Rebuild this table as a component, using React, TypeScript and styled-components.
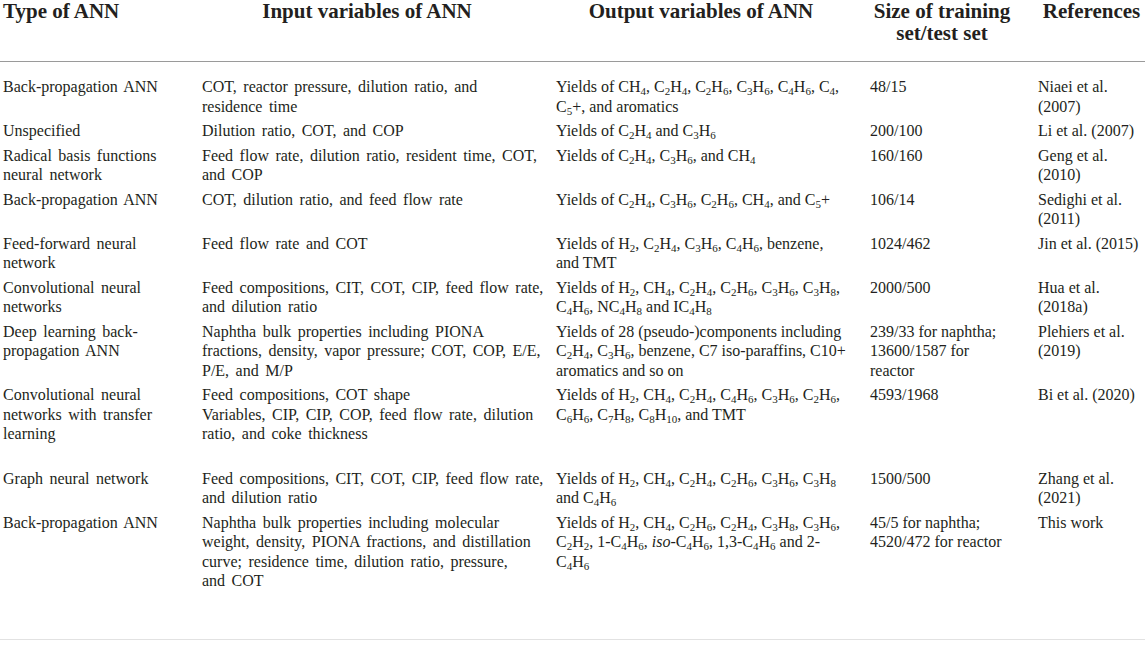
import styled, { createGlobalStyle } from 'styled-components';

type Entry = {
  type: string[];
  input: string[];
  output: string[];
  size: string[];
  refs: string[];
  gapAfter?: boolean;
};

// "_n" marks a subscript, "*x*" marks italics
const ROWS: Entry[] = [
  {
    type: ['Back-propagation ANN'],
    input: ['COT, reactor pressure, dilution ratio, and', 'residence time'],
    output: ['Yields of CH_4, C_2H_4, C_2H_6, C_3H_6, C_4H_6, C_4,', 'C_5+, and aromatics'],
    size: ['48/15'],
    refs: ['Niaei et al.', '(2007)'],
  },
  {
    type: ['Unspecified'],
    input: ['Dilution ratio, COT, and COP'],
    output: ['Yields of C_2H_4 and C_3H_6'],
    size: ['200/100'],
    refs: ['Li et al. (2007)'],
  },
  {
    type: ['Radical basis functions', 'neural network'],
    input: ['Feed flow rate, dilution ratio, resident time, COT,', 'and COP'],
    output: ['Yields of C_2H_4, C_3H_6, and CH_4'],
    size: ['160/160'],
    refs: ['Geng et al.', '(2010)'],
  },
  {
    type: ['Back-propagation ANN'],
    input: ['COT, dilution ratio, and feed flow rate'],
    output: ['Yields of C_2H_4, C_3H_6, C_2H_6, CH_4, and C_5+'],
    size: ['106/14'],
    refs: ['Sedighi et al.', '(2011)'],
  },
  {
    type: ['Feed-forward neural', 'network'],
    input: ['Feed flow rate and COT'],
    output: ['Yields of H_2, C_2H_4, C_3H_6, C_4H_6, benzene,', 'and TMT'],
    size: ['1024/462'],
    refs: ['Jin et al. (2015)'],
  },
  {
    type: ['Convolutional neural', 'networks'],
    input: ['Feed compositions, CIT, COT, CIP, feed flow rate,', 'and dilution ratio'],
    output: ['Yields of H_2, CH_4, C_2H_4, C_2H_6, C_3H_6, C_3H_8,', 'C_4H_6, NC_4H_8 and IC_4H_8'],
    size: ['2000/500'],
    refs: ['Hua et al.', '(2018a)'],
  },
  {
    type: ['Deep learning back-', 'propagation ANN'],
    input: [
      'Naphtha bulk properties including PIONA',
      'fractions, density, vapor pressure; COT, COP, E/E,',
      'P/E, and M/P',
    ],
    output: [
      'Yields of 28 (pseudo-)components including',
      'C_2H_4, C_3H_6, benzene, C7 iso-paraffins, C10+',
      'aromatics and so on',
    ],
    size: ['239/33 for naphtha;', '13600/1587 for', 'reactor'],
    refs: ['Plehiers et al.', '(2019)'],
  },
  {
    type: ['Convolutional neural', 'networks with transfer', 'learning'],
    input: [
      'Feed compositions, COT shape',
      'Variables, CIP, CIP, COP, feed flow rate, dilution',
      'ratio, and coke thickness',
    ],
    output: ['Yields of H_2, CH_4, C_2H_4, C_4H_6, C_3H_6, C_2H_6,', 'C_6H_6, C_7H_8, C_8H_10, and TMT'],
    size: ['4593/1968'],
    refs: ['Bi et al. (2020)'],
    gapAfter: true,
  },
  {
    type: ['Graph neural network'],
    input: ['Feed compositions, CIT, COT, CIP, feed flow rate,', 'and dilution ratio'],
    output: ['Yields of H_2, CH_4, C_2H_4, C_2H_6, C_3H_6, C_3H_8', 'and C_4H_6'],
    size: ['1500/500'],
    refs: ['Zhang et al.', '(2021)'],
  },
  {
    type: ['Back-propagation ANN'],
    input: [
      'Naphtha bulk properties including molecular',
      'weight, density, PIONA fractions, and distillation',
      'curve; residence time, dilution ratio, pressure,',
      'and COT',
    ],
    output: [
      'Yields of H_2, CH_4, C_2H_6, C_2H_4, C_3H_8, C_3H_6,',
      'C_2H_2, 1-C_4H_6, *iso*-C_4H_6, 1,3-C_4H_6 and 2-',
      'C_4H_6',
    ],
    size: ['45/5 for naphtha;', '4520/472 for reactor'],
    refs: ['This work'],
  },
];

const COLUMNS = '199px 354px 314px 168px 1fr';

function Rich({ text }: { text: string }) {
  const parts = text.split(/(_\d+|\*[^*]+\*)/);
  return (
    <>
      {parts.map((part, i) => {
        if (part.startsWith('_')) return <Sub key={i}>{part.slice(1)}</Sub>;
        if (part.startsWith('*')) return <em key={i}>{part.slice(1, -1)}</em>;
        return part;
      })}
    </>
  );
}

function CellLines({ lines, spaced }: { lines: string[]; spaced?: boolean }) {
  return (
    <Cell $spaced={spaced}>
      {lines.map((line, i) => (
        <Line key={i}>
          <Rich text={line} />
        </Line>
      ))}
    </Cell>
  );
}

export default function App() {
  return (
    <>
      <GlobalStyle />
      <StyledTable>
        <HeaderRow>
          <HeadCell $align="left">Type of ANN</HeadCell>
          <HeadCell>Input variables of ANN</HeadCell>
          <HeadCell>Output variables of ANN</HeadCell>
          <HeadCell>
            Size of training
            <br />
            set/test set
          </HeadCell>
          <HeadCell $padRight={0}>References</HeadCell>
        </HeaderRow>
        <Body>
          {ROWS.map((row, i) => (
            <BodyRow key={i} $gapAfter={row.gapAfter}>
              <CellLines lines={row.type} spaced />
              <CellLines lines={row.input} spaced />
              <CellLines lines={row.output} />
              <CellLines lines={row.size} />
              <CellLines lines={row.refs} />
            </BodyRow>
          ))}
        </Body>
      </StyledTable>
    </>
  );
}

const GlobalStyle = createGlobalStyle`
  html, body {
    margin: 0;
    padding: 0;
    background: #ffffff;
  }

  body {
    font-family: "Liberation Serif", "Times New Roman", serif;
    color: #231f20;
  }
`;

const StyledTable = styled.div`
  width: 1145px;
  display: flex;
  flex-direction: column;
`;

const HeaderRow = styled.div`
  display: grid;
  grid-template-columns: ${COLUMNS};
  padding: 0 0 17px 3px;
  border-bottom: 1px solid #9a9a9a;
`;

const HeadCell = styled.div<{ $align?: 'left' | 'center'; $padRight?: number }>`
  font-size: 21px;
  font-weight: bold;
  line-height: 22px;
  white-space: nowrap;
  text-align: ${({ $align }) => $align || 'center'};
  padding-right: ${({ $padRight }) => ($padRight ?? 24)}px;
`;

const Body = styled.div`
  display: flex;
  flex-direction: column;
  padding: 13px 0 45px 3px;
  border-bottom: 1px solid #e2e2e2;
`;

// one row of the source has an empty trailing line below it
const BodyRow = styled.div<{ $gapAfter?: boolean }>`
  display: grid;
  grid-template-columns: ${COLUMNS};
  padding: 2px 0 ${({ $gapAfter }) => ($gapAfter ? 23 : 3)}px;
`;

// the first two columns of the source are set with wider word spaces
const Cell = styled.div<{ $spaced?: boolean }>`
  font-size: 16px;
  line-height: 19.5px;
  display: flex;
  flex-direction: column;
  word-spacing: ${({ $spaced }) => ($spaced ? '2.5px' : '0')};
`;

const Line = styled.span`
  white-space: nowrap;
`;

const Sub = styled.sub`
  font-size: 11px;
  line-height: 0;
  vertical-align: -3px;
`;
